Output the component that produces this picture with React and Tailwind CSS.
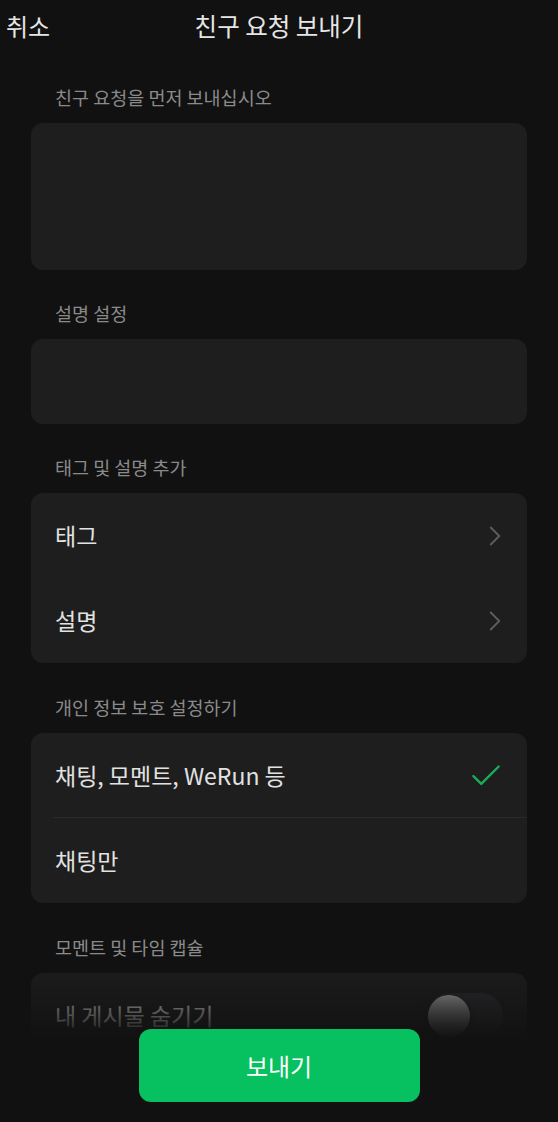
import { Check, ChevronRight } from "lucide-react";

const font = { fontFamily: '"Noto Sans CJK KR", "Noto Sans", sans-serif' };

const Section = ({ label, children, className = "" }) => (
  <div className={`flex flex-col ${className}`}>
    <div className="h-[24px] leading-[24px] pl-[55px] text-[18.5px] text-[#8a8a8a]">{label}</div>
    <div className="mx-[31px] mt-[14px] rounded-[12px] bg-[#1e1e1e] overflow-hidden">{children}</div>
  </div>
);

const Row = ({ text, right, divider }) => (
  <div className="relative flex h-[85px] items-center justify-between pl-[24px] pr-[27px]">
    <span className="text-[23px] text-[#e2e2e2]">{text}</span>
    {right}
    {divider && <div className="absolute bottom-0 left-[22px] right-0 h-px bg-[#2a2a2a]" />}
  </div>
);

const Chevron = () => (
  <ChevronRight size={34} strokeWidth={1.3} className="text-[#5e5e5e] -mr-[12px]" />
);

export default function App() {
  return (
    <div style={font} className="relative h-[1122px] w-[558px] overflow-hidden bg-[#111111]">
      <div className="grid h-[52px] grid-cols-[1fr_auto_1fr] items-center">
        <span className="pl-[6px] text-[24px] text-[#e6e6e6]">취소</span>
        <span className="text-[24.5px] text-[#e6e6e6]">친구 요청 보내기</span>
        <span />
      </div>

      <div className="mt-[33px] flex flex-col">
        <Section label="친구 요청을 먼저 보내십시오">
          <div className="h-[147px]" />
        </Section>
        <Section label="설명 설정" className="mt-[31px]">
          <div className="h-[85px]" />
        </Section>
        <Section label="태그 및 설명 추가" className="mt-[31px]">
          <Row text="태그" right={<Chevron />} />
          <Row text="설명" right={<Chevron />} />
        </Section>
        <Section label="개인 정보 보호 설정하기" className="mt-[32px]">
          <Row
            text="채팅, 모멘트, WeRun 등"
            divider
            right={<Check size={38} strokeWidth={1.5} className="text-[#1aad5a] -mr-[5px]" />}
          />
          <Row text="채팅만" />
        </Section>
        <Section label="모멘트 및 타임 캡슐" className="mt-[32px]">
          <Row
            text="내 게시물 숨기기"
            right={
              <div className="relative h-[45px] w-[76px] rounded-full bg-[#2c2c30] -mr-[3px]">
                <div className="absolute left-[1px] top-[2px] h-[42px] w-[42px] rounded-full bg-gradient-to-b from-[#b0b0b0] to-[#606060] shadow-[0_2px_6px_rgba(0,0,0,0.5)]" />
              </div>
            }
          />
        </Section>
      </div>

      <div className="absolute inset-x-0 bottom-0 flex h-[165px] items-end justify-center bg-gradient-to-b from-[#11111100] via-[#111111] via-50% to-[#111111] pb-[20px]">
        <button className="flex h-[73px] w-[281px] items-center justify-center rounded-[12px] bg-[#07c160] text-[24px] text-white">
          보내기
        </button>
      </div>
    </div>
  );
}
